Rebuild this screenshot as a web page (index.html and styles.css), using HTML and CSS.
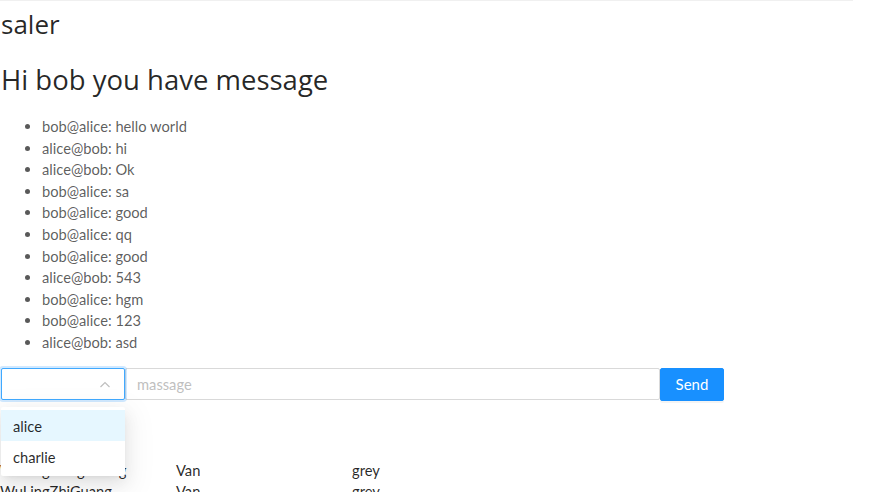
FILE: index.html
```html
<!DOCTYPE html>
<html>
<head>
<meta charset="utf-8">
<link rel="stylesheet" href="styles.css">
</head>
<body>
<div class="topline"></div>
<h2 class="title">saler</h2>
<h1 class="greet">Hi bob you have message</h1>
<ul class="msgs">
  <li>bob@alice: hello world</li>
  <li>alice@bob: hi</li>
  <li>alice@bob: Ok</li>
  <li>bob@alice: sa</li>
  <li>bob@alice: good</li>
  <li>bob@alice: qq</li>
  <li>bob@alice: good</li>
  <li>alice@bob: 543</li>
  <li>bob@alice: hgm</li>
  <li>bob@alice: 123</li>
  <li>alice@bob: asd</li>
</ul>
<div class="composer">
  <div class="select-wrap">
    <div class="select">
      <svg class="arrow" width="12" height="12" viewBox="0 0 12 12"><path d="M1.5 8 L6 3.5 L10.5 8" fill="none" stroke="#bfbfbf" stroke-width="1.2"/></svg>
    </div>
    <div class="dropdown">
      <div class="opt active">alice</div>
      <div class="opt">charlie</div>
    </div>
  </div>
  <input class="msg-input" placeholder="massage">
  <button class="send">Send</button>
</div>
<div class="table">
  <div class="row"><span class="c1">WuLingHongGuang</span><span class="c2">Van</span><span class="c3">grey</span></div>
  <div class="row"><span class="c1">WuLingZhiGuang</span><span class="c2">Van</span><span class="c3">grey</span></div>
</div>
</body>
</html>
```
FILE: styles.css
```css
html, body {
  margin: 0;
  padding: 0;
  background: #fff;
}
body {
  font-family: "Lato", "Open Sans", sans-serif;
  font-size: 14.7px;
  line-height: 1.5715;
  color: rgba(0,0,0,0.65);
}
.topline {
  width: 853px;
  height: 1px;
  background: #f0f0f0;
}
.title, .greet {
  font-family: "Open Sans", sans-serif;
  font-weight: 400;
  color: rgba(0,0,0,0.85);
  margin: 0;
  padding-left: 1px;
}
.title {
  font-size: 26px;
  line-height: 32px;
  margin-top: 7px;
}
.greet {
  font-size: 27.5px;
  line-height: 40px;
  margin-top: 20px;
}
.msgs {
  margin: 16px 0 0 0;
  padding-left: 42px;
  line-height: 21.6px;
}
.composer {
  display: flex;
  margin-top: 14px;
  padding-left: 1px;
  height: 32px;
}
.select-wrap {
  position: relative;
  flex: none;
  width: 124px;
}
.select {
  box-sizing: border-box;
  height: 32px;
  border: 1px solid #40a9ff;
  border-radius: 2px;
  box-shadow: 0 0 0 2px rgba(24,144,255,0.2);
  background: #fff;
  position: relative;
}
.arrow {
  position: absolute;
  right: 13px;
  top: 10px;
}
.dropdown {
  position: absolute;
  left: 0;
  top: 39px;
  width: 124px;
  background: #fff;
  border-radius: 2px;
  box-shadow: 0 3px 6px -4px rgba(0,0,0,0.12), 0 6px 16px 0 rgba(0,0,0,0.08), 0 9px 28px 8px rgba(0,0,0,0.05);
  padding: 3px 0 4px;
  z-index: 10;
}
.opt {
  padding: 5px 12px 4px;
  line-height: 22px;
  color: rgba(0,0,0,0.85);
}
.opt.active {
  background: #e6f7ff;
}
.msg-input {
  box-sizing: border-box;
  flex: none;
  width: 535px;
  height: 32px;
  border: 1px solid #d9d9d9;
  border-radius: 2px;
  padding: 4px 11px;
  font-family: inherit;
  font-size: 14.7px;
  margin: 0;
  outline: none;
}
.msg-input::placeholder {
  color: #bfbfbf;
}
.send {
  box-sizing: border-box;
  flex: none;
  width: 64px;
  height: 33px;
  background: #1890ff;
  border: 1px solid #1890ff;
  border-radius: 2px;
  color: #fff;
  font-family: inherit;
  font-size: 15px;
  margin: 0;
  box-shadow: 0 2px 0 rgba(0,0,0,0.045);
}
.table {
  margin-top: 60px;
  color: rgba(0,0,0,0.85);
}
.row {
  display: flex;
  line-height: 21px;
}
.c1 { width: 176px; }
.c2 { width: 176px; }
```
